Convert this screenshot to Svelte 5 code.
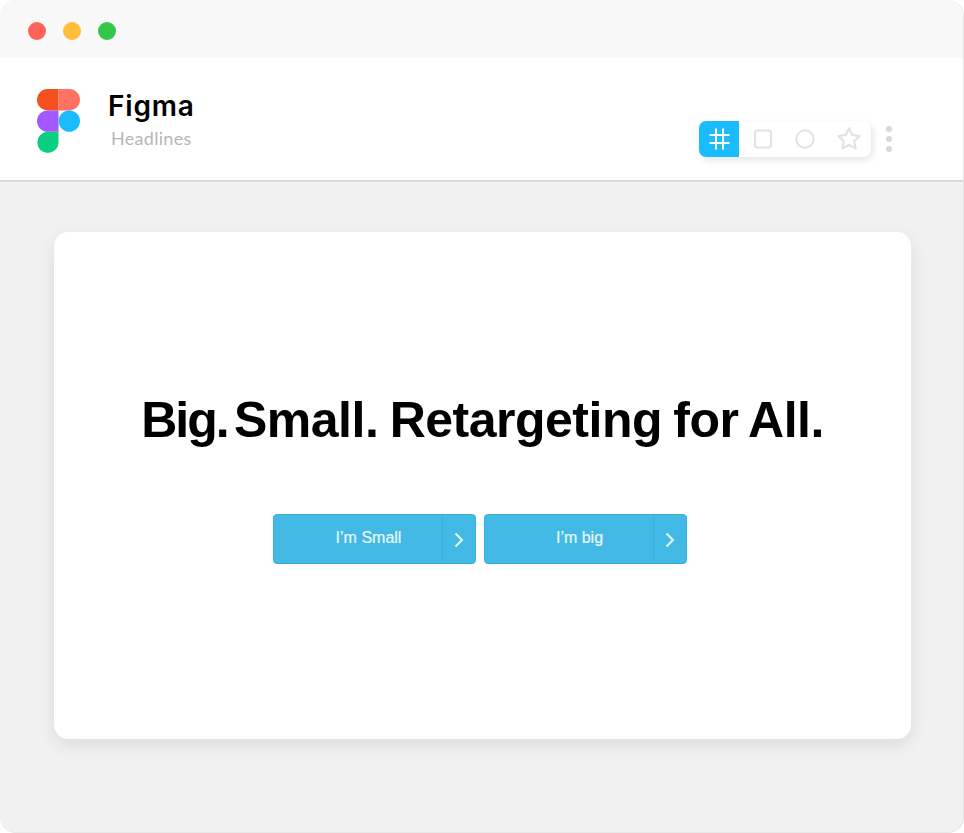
<script>
	const buttons = ["I’m Small", "I’m big"];
</script>

<div class="window">
	<div class="titlebar">
		<span class="light red"></span>
		<span class="light yellow"></span>
		<span class="light green"></span>
	</div>

	<header class="header">
		<svg class="logo" width="43" height="64" viewBox="0 0 43 64">
			<path d="M21.500 0H10.700a10.700 10.700 0 0 0 0 21.400h10.800z" fill="#f4511e" />
			<path d="M21.500 0h10.800a10.700 10.700 0 0 1 0 21.400H21.500z" fill="#ff7262" />
			<path d="M21.500 21.400H10.700a10.700 10.700 0 0 0 0 21.400h10.800z" fill="#a259ff" />
			<circle cx="32.300" cy="32.100" r="10.700" fill="#1abcfe" />
			<path d="M21.500 42.800H10.700a10.600 10.600 0 1 0 10.800 10.600z" fill="#0acf83" />
		</svg>
		<div class="names">
			<div class="app-name">Figma</div>
			<div class="page-name">Headlines</div>
		</div>
		<div class="tools">
			<div class="toolbar">
				<span class="tool active">
					<svg width="22" height="22" viewBox="0 0 22 22" fill="none" stroke="#fff" stroke-width="2">
						<path d="M8 0.500v21M15 0.500v21M1.500 7h20M1.500 15h20" />
					</svg>
				</span>
				<span class="tool square">
					<svg width="20" height="20" viewBox="0 0 20 20" fill="none" stroke="#e2e2e2" stroke-width="2">
						<rect x="2" y="1.500" width="16" height="17" rx="2.500" />
					</svg>
				</span>
				<span class="tool">
					<svg width="20" height="20" viewBox="0 0 20 20" fill="none" stroke="#e2e2e2" stroke-width="2">
						<circle cx="10" cy="10" r="8.700" />
					</svg>
				</span>
				<span class="tool">
					<svg width="24" height="24" viewBox="0 0 24 24" fill="none" stroke="#e2e2e2" stroke-width="2.200" stroke-linejoin="round">
						<path d="M12 1.500L15.300 8L22.500 9.100L17.300 14L18.500 21.400L12 18L5.500 21.400L6.700 14L1.500 9.100L8.700 8z" />
					</svg>
				</span>
			</div>
			<div class="more">
				<span></span>
				<span></span>
				<span></span>
			</div>
		</div>
	</header>

	<main class="content">
		<section class="card">
			<h1><span class="tight">Big.</span> Small. Retargeting for All.</h1>
			<div class="actions">
				{#each buttons as label}
					<button class="cta">
						<span class="label">{label}</span>
						<span class="arrow">
							<svg width="12" height="16" viewBox="0 0 12 16" fill="none" stroke="#eaf8fd" stroke-width="2">
								<path d="M2.500 1.500L9 8l-6.500 6.500" />
							</svg>
						</span>
					</button>
				{/each}
			</div>
		</section>
	</main>
</div>

<style>
	:global(body) {
		background: #fff;
	}

	.window {
		width: 964px;
		height: 833px;
		box-sizing: border-box;
		display: flex;
		flex-direction: column;
		overflow: hidden;
		border-radius: 16px;
		border-right: 1px solid #e2e2e2;
		border-bottom: 1px solid #e8e8e8;
		background: #f1f1f1;
		font-family: Lato, "Noto Sans", sans-serif;
	}

	.titlebar {
		height: 58px;
		flex: none;
		display: flex;
		align-items: center;
		gap: 17px;
		padding: 3px 0 0 28px;
		box-sizing: border-box;
		background: #f8f8f8;
	}

	.light {
		width: 18px;
		height: 18px;
		border-radius: 50%;
	}

	.red {
		background: #ff6259;
	}

	.yellow {
		background: #ffbd3c;
	}

	.green {
		background: #33c748;
	}

	.header {
		height: 124px;
		flex: none;
		box-sizing: border-box;
		display: flex;
		align-items: flex-start;
		padding: 31px 0 0 37px;
		background: #fff;
		border-bottom: 2px solid #dadada;
	}

	.names {
		margin-left: 28px;
	}

	.app-name {
		font-family: Inter, sans-serif;
		font-size: 28px;
		font-weight: 600;
		line-height: 34px;
		letter-spacing: 0.8px;
		color: #000;
	}

	.page-name {
		margin: 4px 0 0 3px;
		font-size: 18px;
		line-height: 22px;
		letter-spacing: 0.3px;
		color: #b6b6b6;
	}

	.tools {
		margin-left: auto;
		margin-top: 32px;
		display: flex;
		align-items: center;
		padding-right: 71px;
	}

	.toolbar {
		display: flex;
		width: 172px;
		height: 36px;
		border-radius: 7px;
		overflow: hidden;
		background: #fff;
		box-shadow: 2px 3px 7px rgba(0, 0, 0, 0.1);
	}

	.tool {
		width: 44px;
		display: flex;
		align-items: center;
		justify-content: center;
	}

	.tool.active {
		width: 40px;
		background: #1abcfe;
	}

	.tool.square {
		padding-left: 4px;
		width: 40px;
	}

	.more {
		margin-left: 15px;
		display: flex;
		flex-direction: column;
		gap: 4px;
	}

	.more span {
		width: 6px;
		height: 6px;
		border-radius: 50%;
		background: #d8d8d8;
	}

	.content {
		flex: 1;
		padding: 50px 52px 93px 54px;
		box-sizing: border-box;
		display: flex;
	}

	.card {
		flex: 1;
		display: flex;
		flex-direction: column;
		align-items: center;
		border-radius: 14px;
		background: #fff;
		box-shadow: 0 6px 18px rgba(0, 0, 0, 0.09);
	}

	h1 {
		margin: 157px 0 0;
		font-family: "Liberation Sans", Arial, sans-serif;
		font-size: 50px;
		font-weight: 700;
		line-height: 62px;
		letter-spacing: -0.5px;
		word-spacing: -2px;
		color: #000;
	}

	.tight {
		margin-right: -5px;
		letter-spacing: -2px;
	}

	.actions {
		margin-top: 63px;
		display: flex;
		gap: 8px;
		margin-left: -6px;
	}

	.cta {
		width: 203px;
		height: 50px;
		padding: 0;
		display: flex;
		border: 1px solid #35ade0;
		border-radius: 4px;
		background: #43b9e6;
		color: #e9f7fc;
		font-family: "Liberation Sans", Arial, sans-serif;
		font-size: 16px;
		font-weight: 400;
	}

	.label {
		flex: 1;
		align-self: center;
		text-align: center;
		padding: 0 0 3px 22px;
		-webkit-text-stroke: 0.2px #e9f7fc;
	}

	.arrow {
		width: 32px;
		display: flex;
		align-items: center;
		justify-content: center;
		border-left: 1px solid #3bafdd;
		padding-top: 2px;
	}
</style>
